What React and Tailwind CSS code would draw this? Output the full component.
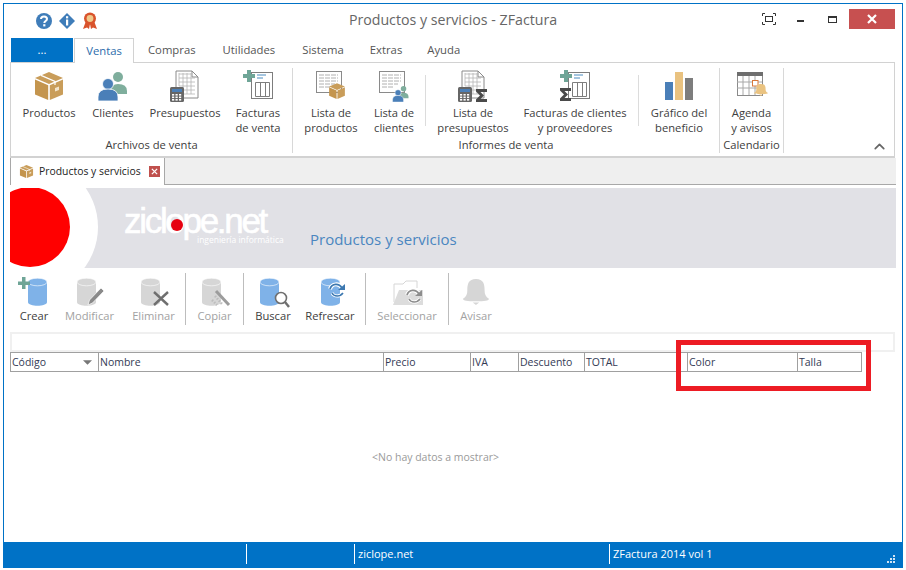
import { ChevronUp } from 'lucide-react';

const uiFont = "font-['Open_Sans','Noto_Sans',sans-serif]";

function BoxIcon({ className = 'w-8 h-8' }) {
  return (
    <svg viewBox="0 0 32 32" className={className}>
      <path d="M2 8 L16 2 L30 8 L16 14 Z" fill="#c99d5a" />
      <path d="M2 9.5 L15.2 15.2 V30 L2 24.5 Z" fill="#c4954e" />
      <path d="M30 9.5 L16.8 15.2 V30 L30 24.5 Z" fill="#c99d5a" />
      <path d="M8 5.4 L22 11.4 V15" stroke="#fff" strokeWidth="1.2" fill="none" />
      <path d="M22 18 l4 -1.6 v3.5 l-4 1.6 z" fill="#f3e5cc" />
    </svg>
  );
}

function PeopleIcon({ small }) {
  return (
    <g transform={small ? 'translate(14 15) scale(.55)' : undefined}>
      <circle cx="21" cy="7" r="5" fill="#7fae9d" />
      <path d="M14 21 q0 -7 7 -7 q9 0 9 7 v3 h-16 z" fill="#7fae9d" />
      <circle cx="11" cy="14" r="5.5" fill="#4a7fb8" stroke="#fff" strokeWidth=".8" />
      <path d="M1 31 v-4 q0 -8 10 -8 q10 0 10 8 v4 z" fill="#4a7fb8" stroke="#fff" strokeWidth=".8" />
    </g>
  );
}

function Calculator() {
  return (
    <g>
      <rect x="1" y="17" width="14" height="15" rx="1.5" fill="#666666" />
      <rect x="3" y="19" width="10" height="3" fill="#4a7fb8" />
      {[3, 6.5, 10].map((x) =>
        [24, 26.5, 29].map((y) => <rect key={`${x}-${y}`} x={x} y={y} width="2.2" height="1.6" fill="#fff" />)
      )}
    </g>
  );
}

function SheetGrid() {
  return (
    <g stroke="#8a8a8a" fill="none">
      <path d="M7 17 V1 H23 L29 7 V28 H15" fill="#fff" />
      <path d="M23 1 V7 H29" />
      <path d="M10 4 H23 M10 8 H26 M10 12 H26 M10 16 H26 M15 20 H26 M15 24 H26 M10 3 V16 M14 3 V24 M18 3 V24 M22 3 V24" strokeWidth=".8" stroke="#b5b5b5" />
    </g>
  );
}

function PresupuestosIcon() {
  return (
    <svg viewBox="0 0 32 32" className="w-8 h-8">
      <SheetGrid />
      <Calculator />
    </svg>
  );
}

function Sigma({ x = 19, y = 19, s = 1 }) {
  return (
    <path
      transform={`translate(${x} ${y}) scale(${s})`}
      d="M0 0 H11 V3 H4.5 L8 6.5 L4.5 10 H11 V13 H0 V10.5 L4 6.5 L0 2.5 Z"
      fill="#4a4a4a"
    />
  );
}

function FacturaIcon({ sigma }) {
  return (
    <svg viewBox="0 0 32 32" className="w-8 h-8">
      <rect x="9.5" y="2.5" width="21" height="26" fill="#fff" stroke="#7d7d7d" />
      <path d="M13.5 12.5 H27.5 V26.5 H13.5 Z M18.5 12.5 V26.5 M23.5 12.5 V26.5" fill="none" stroke="#7d7d7d" />
      <path d="M15 5 H24 M15 8 H21" stroke="#4a8cc0" />
      <path d="M5 0 H9 V4 H13 V8 H9 V12 H5 V8 H1 V4 H5 Z" fill="#6fa597" />
      {sigma && <Sigma x={1} y={18} />}
    </svg>
  );
}

function ListaIcon({ children }) {
  return (
    <svg viewBox="0 0 32 32" className="w-8 h-8">
      <rect x="1.5" y="1.5" width="25" height="21" fill="#fff" stroke="#8a8a8a" />
      <path d="M4 5 H23 M4 8 H23 M4 11 H23 M4 14 H20 M4 17 H16" stroke="#b0b0b0" strokeDasharray="5 1" />
      {children}
    </svg>
  );
}

function ListaPresupuestosIcon() {
  return (
    <svg viewBox="0 0 32 32" className="w-8 h-8">
      <g transform="translate(-2 0)"><SheetGrid /></g>
      <Calculator />
      <Sigma x={19} y={19} />
    </svg>
  );
}

function ChartIcon() {
  return (
    <svg viewBox="0 0 32 32" className="w-8 h-8">
      <rect x="2" y="12" width="8" height="18" fill="#4a7fb8" />
      <rect x="12" y="2" width="8" height="28" fill="#e9c280" />
      <rect x="22" y="8" width="8" height="22" fill="#7d7d7d" />
    </svg>
  );
}

function Bell({ fill = '#eac381' }) {
  return (
    <path
      d="M12 0 C5 0 4 4 4 9 C4 12 3 14 0 15.5 C0 17 4 17.5 12 17.5 C20 17.5 24 17 24 15.5 C21 14 20 12 20 9 C20 4 19 0 12 0 Z M9 18.5 H15 L12 20.5 Z"
      fill={fill}
    />
  );
}

function AgendaIcon() {
  return (
    <svg viewBox="0 0 32 32" className="w-8 h-8">
      <rect x="1.5" y="2.5" width="25" height="23" fill="#fff" stroke="#8a8a8a" />
      <rect x="1" y="2" width="26" height="4" fill="#6e6e6e" />
      <path d="M1 12 H26 M1 18 H26 M7 6 V25 M13 6 V25 M19 6 V25" stroke="#a8a8a8" />
      <rect x="16.5" y="10.5" width="5.5" height="5.5" fill="#fff" stroke="#d9783a" />
      <g transform="translate(18 14) scale(.58)"><Bell /></g>
    </svg>
  );
}

function Cylinder({ color = '#7fb2e8', top = '#7fb2e8' }) {
  return (
    <g>
      <path d="M4 5 V25 C4 30 23 30 23 25 V5 Z" fill={color} />
      <ellipse cx="13.5" cy="5" rx="9.5" ry="3.8" fill={top} stroke="#fff" strokeWidth=".6" />
    </g>
  );
}

function CrearIcon() {
  return (
    <svg viewBox="0 0 34 32" className="w-[34px] h-8">
      <g transform="translate(7 1)"><Cylinder /></g>
      <path d="M5 1 H8.5 V5.5 H13 V9 H8.5 V13 H5 V9 H1 V5.5 H5 Z" fill="#6fa597" />
    </svg>
  );
}

function ModificarIcon() {
  return (
    <svg viewBox="0 0 34 32" className="w-[34px] h-8">
      <g transform="translate(0 1)"><Cylinder color="#d6d6d6" top="#d6d6d6" /></g>
      <path d="M15 29 l1.5 -5 L28 12 l3 3 L19.5 27 z" fill="#8a8a8a" stroke="#fff" strokeWidth=".7" />
    </svg>
  );
}

function EliminarIcon() {
  return (
    <svg viewBox="0 0 34 32" className="w-[34px] h-8">
      <g transform="translate(0 1)"><Cylinder color="#d6d6d6" top="#d6d6d6" /></g>
      <path d="M17 16 L31 29 M31 16 L17 29" stroke="#6f6f6f" strokeWidth="2.4" />
    </svg>
  );
}

function CopiarIcon() {
  return (
    <svg viewBox="0 0 34 32" className="w-[34px] h-8">
      <g transform="translate(0 1)"><Cylinder color="#d6d6d6" top="#d6d6d6" /></g>
      <path d="M18 15 L31 29" stroke="#9c9c9c" strokeWidth="3" />
      <path d="M17 20 l7 8 M14 24 l5 5" stroke="#bdbdbd" strokeWidth="2.5" strokeDasharray="1.5 1.5" />
    </svg>
  );
}

function BuscarIcon() {
  return (
    <svg viewBox="0 0 34 32" className="w-[34px] h-8">
      <g transform="translate(0 1)"><Cylinder /></g>
      <circle cx="25" cy="22" r="5.5" fill="#fff" stroke="#6f6f6f" strokeWidth="1.6" />
      <path d="M29 26 L33 31" stroke="#6f6f6f" strokeWidth="2.4" />
    </svg>
  );
}

function Refresh({ color }) {
  return (
    <g fill="none">
      <path d="M0 6 C2 0 9 0 12 5" stroke="#fff" strokeWidth="4" />
      <path d="M0 6 C2 0 9 0 12 5" stroke={color} strokeWidth="1.8" />
      <path d="M8 7 H15 V1 Z" fill={color} />
      <path d="M13 10 C10 14 4 14 2 10" stroke="#fff" strokeWidth="3" />
      <path d="M13 10 C10 14 4 14 2 10" stroke={color} strokeWidth="1.6" />
    </g>
  );
}

function RefrescarIcon() {
  return (
    <svg viewBox="0 0 34 32" className="w-[34px] h-8">
      <g transform="translate(4 1)"><Cylinder /></g>
      <g transform="translate(17 7)"><Refresh color="#3d78b0" /></g>
    </svg>
  );
}

function SeleccionarIcon() {
  return (
    <svg viewBox="0 0 34 32" className="w-[34px] h-8">
      <path d="M4 26 V8 H13 L16 5 H27 V12" fill="#fff" stroke="#d6d6d6" />
      <path d="M3 29 L9 14 H33 V29 Z" fill="#dcdcdc" />
      <g transform="translate(17 13)"><Refresh color="#8d8d8d" /></g>
    </svg>
  );
}

function AvisarIcon() {
  return (
    <svg viewBox="0 0 34 32" className="w-[34px] h-8">
      <g transform="translate(4 3) scale(1.08 1.27)"><Bell fill="#d6d6d6" /></g>
    </svg>
  );
}

function RibbonItem({ icon, lines, width }) {
  return (
    <div style={{ width }} className="shrink-0 flex flex-col items-center pt-[2px]">
      {icon}
      <div className="mt-[3px] text-center leading-[15px]">
        {lines.map((l) => <div key={l} className="whitespace-nowrap">{l}</div>)}
      </div>
    </div>
  );
}

function RibbonSep() {
  return <div className="w-px h-[51px] mt-[7px] bg-[#dcdcdc] shrink-0" />;
}

function RibbonGroup({ label, width, children }) {
  return (
    <div style={{ width }} className="shrink-0 h-[85px] mt-[5px] flex flex-col border-r border-[#d8d8d8]">
      <div className="flex flex-1">{children}</div>
      <div className="text-center leading-[15px] pb-[1px] whitespace-nowrap">{label}</div>
    </div>
  );
}

function ToolButton({ icon, label, width, disabled }) {
  return (
    <div style={{ width }} className="shrink-0 flex flex-col items-center pt-[3px]">
      {icon}
      <div className={`leading-[15px] whitespace-nowrap ${disabled ? 'text-[#a2a2a2]' : 'text-[#3d3d3d]'}`}>{label}</div>
    </div>
  );
}

function ToolSep() {
  return <div className="w-px h-[52px] bg-[#bdbdbd] shrink-0" />;
}

const columns = [
  ['Código', 89],
  ['Nombre', 285],
  ['Precio', 87],
  ['IVA', 48],
  ['Descuento', 66],
  ['TOTAL', 103],
  ['Color', 110],
  ['Talla', 64],
];

export default function App() {
  return (
    <div className={`w-[906px] h-[570px] bg-white pt-[3px] pl-[3px] text-[11.2px] text-[#404040] ${uiFont} relative overflow-hidden`}>
      <div className="w-[900px] h-[565px] border border-[#0072c6] flex flex-col">
        {/* title bar */}
        <div className="h-[34px] shrink-0 flex items-center relative">
          <div className="ml-[32px] flex items-center gap-[7px] w-[80px]">
            <svg viewBox="0 0 16 16" className="w-4 h-4">
              <circle cx="8" cy="8" r="8" fill="#3f7db9" />
              <path d="M5 6 C5 2.5 11 2.5 11 6 C11 8 8.3 8 8.3 10" fill="none" stroke="#fff" strokeWidth="2" />
              <rect x="7.2" y="11.2" width="2.2" height="2.2" fill="#fff" />
            </svg>
            <svg viewBox="0 0 16 16" className="w-4 h-4">
              <path d="M8 0 L16 8 L8 16 L0 8 Z" fill="#3f7db9" />
              <rect x="7" y="3.2" width="2.2" height="2.2" fill="#fff" />
              <rect x="7" y="6.5" width="2.2" height="6" fill="#fff" />
            </svg>
            <svg viewBox="0 0 16 18" className="w-4 h-[18px]">
              <path d="M4 9 L1 17 L5 15.5 L7 17 L8 12 L9 17 L11 15.5 L15 17 L12 9 Z" fill="#d9532c" />
              <circle cx="8" cy="6.5" r="6" fill="#d9532c" />
              <circle cx="8" cy="6.5" r="3.4" fill="#f0c98a" />
            </svg>
          </div>
          <div className="absolute left-0 right-0 top-[6px] text-center text-[14.2px] leading-5 text-[#666666]">
            Productos y servicios - ZFactura
          </div>
          <div className="ml-auto mr-[7px] flex items-start h-full pt-[5px]">
            <svg viewBox="0 0 14 12" className="w-[14px] h-3 mr-[21px] mt-[4px]">
              <path d="M.5 3 V.5 H3 M11 .5 H13.5 V3 M13.5 9 V11.5 H11 M3 11.5 H.5 V9" fill="none" stroke="#333" />
              <rect x="3.5" y="3.5" width="7" height="5" fill="none" stroke="#333" />
            </svg>
            <div className="w-[7px] h-[2px] bg-[#333] mt-[11px] mr-[24px]" />
            <div className="w-[9px] h-[7px] border border-t-[2px] border-[#333] mt-[7px] mr-[12px]" />
            <div className="w-[46px] h-5 bg-[#c75050] flex items-center justify-center">
              <svg viewBox="0 0 10 10" className="w-[10px] h-[10px]">
                <path d="M1 1 L9 9 M9 1 L1 9" stroke="#fff" strokeWidth="2.2" />
              </svg>
            </div>
          </div>
        </div>

        {/* menu tabs */}
        <div className="h-6 shrink-0 flex items-stretch pl-[7px] text-[#555555] text-[11.3px] relative z-10">
          <div className="w-[62px] bg-[#0072c6] text-white flex items-center justify-center">...</div>
          <div className="ml-px w-[60px] h-[25px] bg-white border border-b-0 border-[#d2d2d2] flex items-center justify-center text-[#2b6cab]">Ventas</div>
          <div className="ml-[14px] flex items-center">Compras</div>
          <div className="ml-[27px] flex items-center">Utilidades</div>
          <div className="ml-[27px] flex items-center">Sistema</div>
          <div className="ml-[26px] flex items-center">Extras</div>
          <div className="ml-[25px] flex items-center">Ayuda</div>
        </div>

        {/* ribbon */}
        <div className="ml-[6px] mr-[7px] h-[96px] shrink-0 border border-[#d2d2d2] border-b-2 flex relative">
          <RibbonGroup label="Archivos de venta" width={282}>
            <RibbonItem width={76} icon={<BoxIcon />} lines={['Productos']} />
            <RibbonItem width={52} icon={<svg viewBox="0 0 32 32" className="w-8 h-8"><PeopleIcon /></svg>} lines={['Clientes']} />
            <RibbonItem width={92} icon={<PresupuestosIcon />} lines={['Presupuestos']} />
            <RibbonItem width={54} icon={<FacturaIcon />} lines={['Facturas', 'de venta']} />
          </RibbonGroup>
          <RibbonGroup label="Informes de venta" width={427}>
            <RibbonItem width={76} icon={<ListaIcon><svg x="13" y="12" width="18" height="18" viewBox="0 0 32 32"><path d="M2 8 L16 2 L30 8 L16 14 Z" fill="#c99d5a" /><path d="M2 9.5 L15.2 15.2 V30 L2 24.5 Z" fill="#c4954e" /><path d="M30 9.5 L16.8 15.2 V30 L30 24.5 Z" fill="#c99d5a" /></svg></ListaIcon>} lines={['Lista de', 'productos']} />
            <RibbonItem width={50} icon={<ListaIcon><PeopleIcon small /></ListaIcon>} lines={['Lista de', 'clientes']} />
            <div className="w-[6px] shrink-0" />
            <RibbonSep />
            <RibbonItem width={94} icon={<ListaPresupuestosIcon />} lines={['Lista de', 'presupuestos']} />
            <RibbonItem width={110} icon={<FacturaIcon sigma />} lines={['Facturas de clientes', 'y proveedores']} />
            <div className="w-[8px] shrink-0" />
            <RibbonSep />
            <RibbonItem width={80} icon={<ChartIcon />} lines={['Gráfico del', 'beneficio']} />
          </RibbonGroup>
          <RibbonGroup label="Calendario" width={64}>
            <RibbonItem width={63} icon={<AgendaIcon />} lines={['Agenda', 'y avisos']} />
          </RibbonGroup>
          <ChevronUp className="absolute right-[6px] bottom-[1px] w-[17px] h-[17px] text-[#666666]" strokeWidth={2.4} />
        </div>

        {/* doc tabs */}
        <div className="ml-[6px] mr-[6px] h-[27px] shrink-0 bg-[#efefef] border-b border-[#a8a8a8] flex">
          <div className="w-[155px] h-[27px] bg-white border-l border-r border-[#a8a8a8] flex items-center pl-[8px] text-[#222222] text-[10.4px]">
            <BoxIcon className="w-[15px] h-[15px]" />
            <span className="ml-[5px] whitespace-nowrap">Productos y servicios</span>
            <div className="ml-[8px] w-[11px] h-[11px] bg-[#c0504d] flex items-center justify-center">
              <svg viewBox="0 0 8 8" className="w-[7px] h-[7px]">
                <path d="M1 1 L7 7 M7 1 L1 7" stroke="#fff" strokeWidth="1.5" />
              </svg>
            </div>
          </div>
        </div>

        {/* banner */}
        <div className="mt-[3px] ml-[6px] mr-[6px] h-20 shrink-0 bg-[#e1e1e6] relative overflow-hidden flex">
          <svg className="absolute left-0 top-0 w-[100px] h-20" viewBox="0 0 100 80">
            <circle cx="20" cy="39" r="68" fill="#fff" />
            <circle cx="20" cy="39" r="40" fill="#ff0000" />
          </svg>
          <div className="relative ml-[114px] pt-[19px] w-[186px] h-[70px] shrink-0">
            <div className="font-['Liberation_Sans',sans-serif] text-[35px] leading-[28px] tracking-[-2.3px] [-webkit-text-stroke:0.6px_white] text-white">ziclope.net</div>
            <div className="absolute left-[47px] top-[31px] w-3 h-3 rounded-full bg-[#e6000f]" />
            <div className="pl-[73px] text-[8.5px] leading-[10px] text-white whitespace-nowrap">ingeniería informática</div>
          </div>
          <div className="relative mt-[40px] text-[15px] leading-[22px] text-[#4a86c0] whitespace-nowrap">Productos y servicios</div>
        </div>

        {/* toolbar */}
        <div className="ml-[6px] h-[64px] shrink-0 flex items-start pt-[5px] pl-px">
          <ToolButton width={46} icon={<CrearIcon />} label="Crear" />
          <ToolButton width={65} icon={<ModificarIcon />} label="Modificar" disabled />
          <ToolButton width={63} icon={<EliminarIcon />} label="Eliminar" disabled />
          <ToolSep />
          <ToolButton width={57} icon={<CopiarIcon />} label="Copiar" disabled />
          <ToolSep />
          <ToolButton width={58} icon={<BuscarIcon />} label="Buscar" />
          <ToolButton width={56} icon={<RefrescarIcon />} label="Refrescar" />
          <div className="w-[7px] shrink-0" />
          <ToolSep />
          <ToolButton width={82} icon={<SeleccionarIcon />} label="Seleccionar" disabled />
          <ToolSep />
          <ToolButton width={54} icon={<AvisarIcon />} label="Avisar" disabled />
        </div>

        {/* filter box */}
        <div className="ml-[6px] mr-[7px] h-[20px] shrink-0 border-2 border-[#f0f0f0]" />

        {/* grid header */}
        <div className="ml-[6px] h-5 shrink-0 flex border-t border-b border-[#a0a0a0] w-[852px] text-[10.5px] text-[#333a55]">
          {columns.map(([name, w]) => (
            <div key={name} style={{ width: w }} className="shrink-0 border-r border-l-0 border-[#a0a0a0] first:border-l pl-px leading-[17px] flex items-center justify-between whitespace-nowrap overflow-hidden">
              {name}
              {name === 'Código' && (
                <svg viewBox="0 0 10 5" className="w-[9px] h-[5px] mr-[6px]">
                  <path d="M0 0 H10 L5 5 Z" fill="#777777" />
                </svg>
              )}
            </div>
          ))}
        </div>

        {/* empty grid */}
        <div className="flex-1 flex items-center justify-center text-[10.5px] text-[#9a9a9a] pr-[35px] pt-[2px]">
          {'<No hay datos a mostrar>'}
        </div>

        {/* status bar */}
        <div className="h-[25px] shrink-0 bg-[#0072c6] flex items-center pb-[1px] text-white text-[11px] relative">
          <div className="ml-[242px] w-px h-5 bg-white" />
          <div className="ml-[107px] w-px h-5 bg-white" />
          <div className="ml-[3px] w-[251px] whitespace-nowrap">ziclope.net</div>
          <div className="w-px h-5 bg-white" />
          <div className="ml-[3px] whitespace-nowrap">ZFactura 2014 vol 1</div>
          <svg viewBox="0 0 8 8" className="absolute right-[7px] bottom-[4px] w-2 h-2" fill="#cfe3f4">
            <rect x="6" y="0" width="2" height="2" />
            <rect x="3" y="3" width="2" height="2" />
            <rect x="6" y="3" width="2" height="2" />
            <rect x="0" y="6" width="2" height="2" />
            <rect x="3" y="6" width="2" height="2" />
            <rect x="6" y="6" width="2" height="2" />
          </svg>
        </div>
      </div>

      {/* red annotation */}
      <div className="absolute left-[676px] top-[340px] w-[195px] h-[51px] border-[5px] border-[#ed1c24]" />
    </div>
  );
}
